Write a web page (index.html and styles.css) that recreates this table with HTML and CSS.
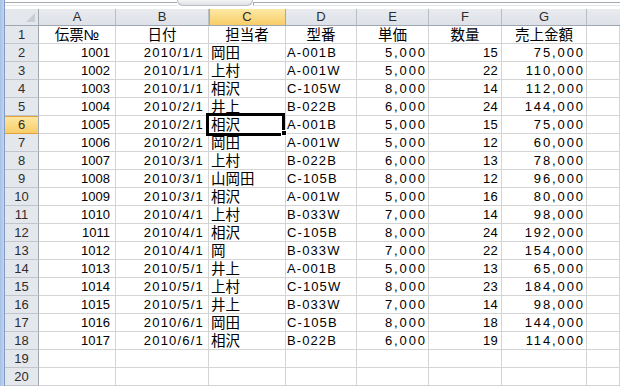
FILE: index.html
```html
<!DOCTYPE html>
<html lang="ja">
<head>
<meta charset="utf-8">
<title>売上表</title>
<link rel="stylesheet" href="styles.css">
</head>
<body>
<div class="frame">
  <div class="edge"></div>
  <div class="main">
    <div class="topbar">
      <div class="fx-left"></div>
      <div class="fx-btn"></div>
      <div class="fx-box"></div>
    </div>
    <div class="sheet">
      <div class="corner"><span class="tri"></span></div>
      <div class="ch">A</div><div class="ch">B</div><div class="ch sel">C</div><div class="ch">D</div><div class="ch">E</div><div class="ch">F</div><div class="ch">G</div><div class="ch last"></div>

      <div class="rh">1</div><div class="c j ctr">伝票№</div><div class="c j ctr">日付</div><div class="c j ctr">担当者</div><div class="c j ctr">型番</div><div class="c j ctr">単価</div><div class="c j ctr">数量</div><div class="c j ctr">売上金額</div><div class="c"></div>
      <div class="rh">2</div><div class="c a">1001</div><div class="c d">2010/1/1</div><div class="c j">岡田</div><div class="c m">A-001B</div><div class="c n">5,000</div><div class="c q">15</div><div class="c n">75,000</div><div class="c"></div>
      <div class="rh">3</div><div class="c a">1002</div><div class="c d">2010/1/1</div><div class="c j">上村</div><div class="c m">A-001W</div><div class="c n">5,000</div><div class="c q">22</div><div class="c n">110,000</div><div class="c"></div>
      <div class="rh">4</div><div class="c a">1003</div><div class="c d">2010/1/1</div><div class="c j">相沢</div><div class="c m">C-105W</div><div class="c n">8,000</div><div class="c q">14</div><div class="c n">112,000</div><div class="c"></div>
      <div class="rh">5</div><div class="c a">1004</div><div class="c d">2010/2/1</div><div class="c j">井上</div><div class="c m">B-022B</div><div class="c n">6,000</div><div class="c q">24</div><div class="c n">144,000</div><div class="c"></div>
      <div class="rh sel">6</div><div class="c a">1005</div><div class="c d">2010/2/1</div><div class="c j">相沢</div><div class="c m">A-001B</div><div class="c n">5,000</div><div class="c q">15</div><div class="c n">75,000</div><div class="c"></div>
      <div class="rh">7</div><div class="c a">1006</div><div class="c d">2010/2/1</div><div class="c j">岡田</div><div class="c m">A-001W</div><div class="c n">5,000</div><div class="c q">12</div><div class="c n">60,000</div><div class="c"></div>
      <div class="rh">8</div><div class="c a">1007</div><div class="c d">2010/3/1</div><div class="c j">上村</div><div class="c m">B-022B</div><div class="c n">6,000</div><div class="c q">13</div><div class="c n">78,000</div><div class="c"></div>
      <div class="rh">9</div><div class="c a">1008</div><div class="c d">2010/3/1</div><div class="c j">山岡田</div><div class="c m">C-105B</div><div class="c n">8,000</div><div class="c q">12</div><div class="c n">96,000</div><div class="c"></div>
      <div class="rh">10</div><div class="c a">1009</div><div class="c d">2010/3/1</div><div class="c j">相沢</div><div class="c m">A-001W</div><div class="c n">5,000</div><div class="c q">16</div><div class="c n">80,000</div><div class="c"></div>
      <div class="rh">11</div><div class="c a">1010</div><div class="c d">2010/4/1</div><div class="c j">上村</div><div class="c m">B-033W</div><div class="c n">7,000</div><div class="c q">14</div><div class="c n">98,000</div><div class="c"></div>
      <div class="rh">12</div><div class="c a">1011</div><div class="c d">2010/4/1</div><div class="c j">相沢</div><div class="c m">C-105B</div><div class="c n">8,000</div><div class="c q">24</div><div class="c n">192,000</div><div class="c"></div>
      <div class="rh">13</div><div class="c a">1012</div><div class="c d">2010/4/1</div><div class="c j">岡</div><div class="c m">B-033W</div><div class="c n">7,000</div><div class="c q">22</div><div class="c n">154,000</div><div class="c"></div>
      <div class="rh">14</div><div class="c a">1013</div><div class="c d">2010/5/1</div><div class="c j">井上</div><div class="c m">A-001B</div><div class="c n">5,000</div><div class="c q">13</div><div class="c n">65,000</div><div class="c"></div>
      <div class="rh">15</div><div class="c a">1014</div><div class="c d">2010/5/1</div><div class="c j">上村</div><div class="c m">C-105W</div><div class="c n">8,000</div><div class="c q">23</div><div class="c n">184,000</div><div class="c"></div>
      <div class="rh">16</div><div class="c a">1015</div><div class="c d">2010/5/1</div><div class="c j">井上</div><div class="c m">B-033W</div><div class="c n">7,000</div><div class="c q">14</div><div class="c n">98,000</div><div class="c"></div>
      <div class="rh">17</div><div class="c a">1016</div><div class="c d">2010/6/1</div><div class="c j">岡田</div><div class="c m">C-105B</div><div class="c n">8,000</div><div class="c q">18</div><div class="c n">144,000</div><div class="c"></div>
      <div class="rh">18</div><div class="c a">1017</div><div class="c d">2010/6/1</div><div class="c j">相沢</div><div class="c m">B-022B</div><div class="c n">6,000</div><div class="c q">19</div><div class="c n">114,000</div><div class="c"></div>
      <div class="rh">19</div><div class="c"></div><div class="c"></div><div class="c"></div><div class="c"></div><div class="c"></div><div class="c"></div><div class="c"></div><div class="c"></div>
      <div class="rh">20</div><div class="c"></div><div class="c"></div><div class="c"></div><div class="c"></div><div class="c"></div><div class="c"></div><div class="c"></div><div class="c"></div>

      <div class="selection"></div>
      <div class="handle"></div>
    </div>
  </div>
</div>
</body>
</html>
```

FILE: styles.css
```css
html, body {
  margin: 0;
  padding: 0;
  background: #ffffff;
}
body {
  width: 620px;
  height: 386px;
  overflow: hidden;
  font-family: "Liberation Sans", "Noto Sans CJK JP", sans-serif;
  font-size: 13px;
  color: #000;
}
.frame {
  display: flex;
  height: 386px;
}
.edge {
  width: 4px;
  flex: none;
  background: linear-gradient(to right, #a6c0e6, #c3d5ef);
  border-right: 1px solid #7f9bc6;
}
.main {
  flex: 1;
  min-width: 0;
  display: flex;
  flex-direction: column;
}
.topbar {
  height: 9px;
  flex: none;
  display: flex;
  align-items: flex-start;
  background: #fff;
}
.fx-left {
  width: 172px;
  margin-top: 2px;
  height: 2px;
  border-top: 1px solid #a3a9b2;
  border-bottom: 1px solid #e3e6ea;
}
.fx-btn {
  width: 74px;
  height: 5px;
  border: 1px solid #b7bcc4;
  border-top: none;
  border-radius: 0 0 10px 10px;
  background: linear-gradient(#f3f4f6, #dfe2e6);
}
.fx-box {
  flex: 1;
  margin-top: 2px;
  height: 2px;
  border-top: 1px solid #a3a9b2;
  border-bottom: 1px solid #e3e6ea;
  border-left: 1px solid #a3a9b2;
}
.sheet {
  position: relative;
  display: grid;
  grid-template-columns: 34px 77px 93px 77px 71px 72px 73px 85px 1fr;
  grid-template-rows: 17px;
  grid-auto-rows: 18px;
}
.sheet > div {
  box-sizing: border-box;
}
.corner {
  position: relative;
  background: #e4e7ec;
  border-right: 1px solid #9ea6b1;
  border-bottom: 1px solid #9ea6b1;
}
.tri {
  position: absolute;
  right: 3px;
  bottom: 3px;
  width: 0;
  height: 0;
  border-left: 9px solid transparent;
  border-bottom: 9px solid #c9cdd3;
}
.ch {
  background: linear-gradient(#e9ebef, #dee1e7);
  border-right: 1px solid #b8bec7;
  border-bottom: 1px solid #9ea6b1;
  text-align: center;
  font-size: 13px;
  line-height: 16px;
  color: #2d2d2d;
}
.ch.sel {
  background: linear-gradient(#fde9a5, #f7cd68);
  border-right-color: #e2a13c;
  box-shadow: inset 1px 0 0 #e2a13c;
}
.ch.last {
  border-right: none;
}
.rh {
  background: #e4e7ec;
  border-right: 1px solid #9ea6b1;
  border-bottom: 1px solid #c1c6cd;
  text-align: center;
  font-size: 13px;
  line-height: 18px;
  color: #2d2d2d;
}
.rh.sel {
  background: linear-gradient(#fde9a5, #f7cd68);
  border-bottom-color: #e2a13c;
  box-shadow: inset 0 1px 0 #e2a13c;
}
.c {
  border-right: 1px solid #d4d4d4;
  border-bottom: 1px solid #d4d4d4;
  line-height: 18px;
  padding: 0 2px;
  white-space: nowrap;
  overflow: hidden;
}
.c.j {
  font-size: 14.5px;
}
.c.ctr {
  text-align: center;
}
.c.a {
  text-align: right;
  padding-right: 5px;
}
.c.d {
  text-align: right;
  letter-spacing: 1.2px;
  padding-right: 4px;
}
.c.m {
  letter-spacing: 1.1px;
  padding-left: 1px;
}
.c.n {
  text-align: right;
  letter-spacing: 1.9px;
  padding-right: 1px;
}
.c.q {
  text-align: right;
  letter-spacing: 0.3px;
  padding-right: 3px;
}
.selection {
  position: absolute;
  left: 201px;
  top: 104px;
  width: 79px;
  height: 23px;
  border: 3px solid #000;
  box-sizing: border-box;
  pointer-events: none;
}
.handle {
  position: absolute;
  left: 276px;
  top: 121px;
  width: 6px;
  height: 6px;
  background: #000;
  border: 1px solid #fff;
}
```
